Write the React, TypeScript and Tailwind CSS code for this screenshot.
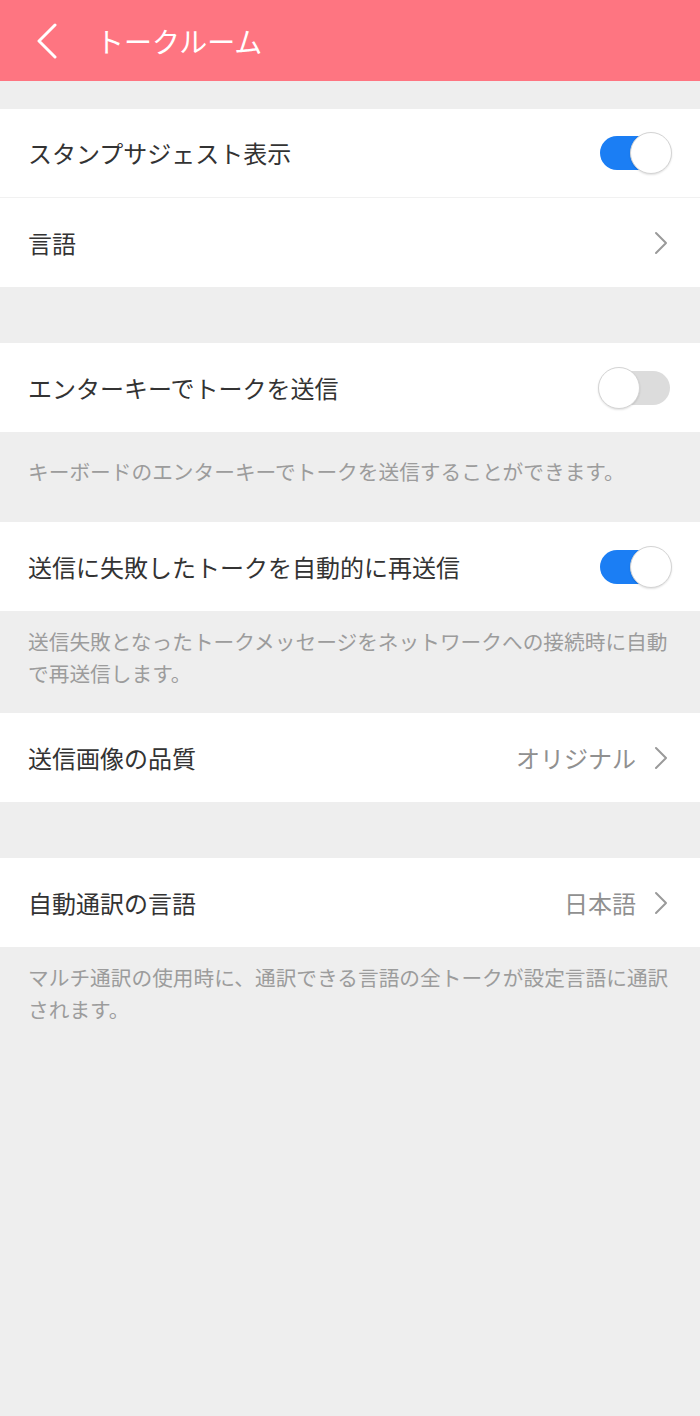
import React from "react";

const font = { fontFamily: '"Noto Sans CJK JP", "Noto Sans", sans-serif' };

function Toggle({ on }: { on: boolean }) {
  return (
    <div className="relative w-[74px] h-[42px] shrink-0">
      <div
        className={`absolute left-[2px] top-[4px] w-[70px] h-[34px] rounded-full ${
          on ? "bg-[#1b7ef4]" : "bg-[#dcdcdc]"
        }`}
      />
      <div
        className={`absolute top-0 w-[42px] h-[42px] rounded-full bg-white border border-[#d4d4d4] shadow-[0_1px_2px_rgba(0,0,0,0.12)] ${
          on ? "left-[32px]" : "left-0"
        }`}
      />
    </div>
  );
}

function Chevron() {
  return (
    <svg width="14" height="24" viewBox="0 0 14 24" className="shrink-0">
      <path d="M2 2 L12 12 L2 22" fill="none" stroke="#9a9a9a" strokeWidth="2" strokeLinecap="round" strokeLinejoin="round" />
    </svg>
  );
}

function Row({
  title,
  right,
  divider,
}: {
  title: string;
  right: React.ReactNode;
  divider?: boolean;
}) {
  return (
    <div
      className={`h-[89px] bg-white flex items-center justify-between pl-[28px] pr-[28px] ${
        divider ? "border-b border-[#f1f1f1]" : ""
      }`}
    >
      <span className="text-[24px] text-[#333333] leading-none">{title}</span>
      {right}
    </div>
  );
}

function ValueChevron({ value }: { value?: string }) {
  return (
    <div className="flex items-center gap-[18px] pr-[4px]">
      {value && <span className="text-[24px] text-[#909090] leading-none">{value}</span>}
      <Chevron />
    </div>
  );
}

export default function App() {
  return (
    <div className="w-[700px] h-[1416px] bg-[#eeeeee]" style={font}>
      <div className="h-[81px] bg-[#fe7581] flex items-center">
        <svg width="24" height="36" viewBox="0 0 24 36" className="ml-[35px]">
          <path d="M20 2 L4 18 L20 34" fill="none" stroke="#ffffff" strokeWidth="3" strokeLinecap="round" strokeLinejoin="round" />
        </svg>
        <span className="ml-[37px] text-[28px] text-white leading-none">トークルーム</span>
      </div>

      <div className="h-[28px]" />
      <Row title="スタンプサジェスト表示" right={<Toggle on />} divider />
      <Row title="言語" right={<ValueChevron />} />

      <div className="h-[56px]" />
      <Row title="エンターキーでトークを送信" right={<Toggle on={false} />} />
      <div className="pl-[28px] pr-[20px] pt-[23px] pb-[35px] text-[20.7px] leading-[32px] text-[#9c9c9c] whitespace-nowrap">
        キーボードのエンターキーでトークを送信することができます。
      </div>

      <Row title="送信に失敗したトークを自動的に再送信" right={<Toggle on />} />
      <div className="pl-[28px] pr-[20px] pt-[14px] pb-[24px] text-[20.7px] leading-[32px] text-[#9c9c9c] whitespace-nowrap">
        送信失敗となったトークメッセージをネットワークへの接続時に自動
        <br />
        で再送信します。
      </div>

      <Row title="送信画像の品質" right={<ValueChevron value="オリジナル" />} />

      <div className="h-[56px]" />
      <Row title="自動通訳の言語" right={<ValueChevron value="日本語" />} />
      <div className="pl-[28px] pr-[20px] pt-[14px] pb-[24px] text-[20.7px] leading-[32px] text-[#9c9c9c] whitespace-nowrap">
        マルチ通訳の使用時に、通訳できる言語の全トークが設定言語に通訳
        <br />
        されます。
      </div>
    </div>
  );
}
